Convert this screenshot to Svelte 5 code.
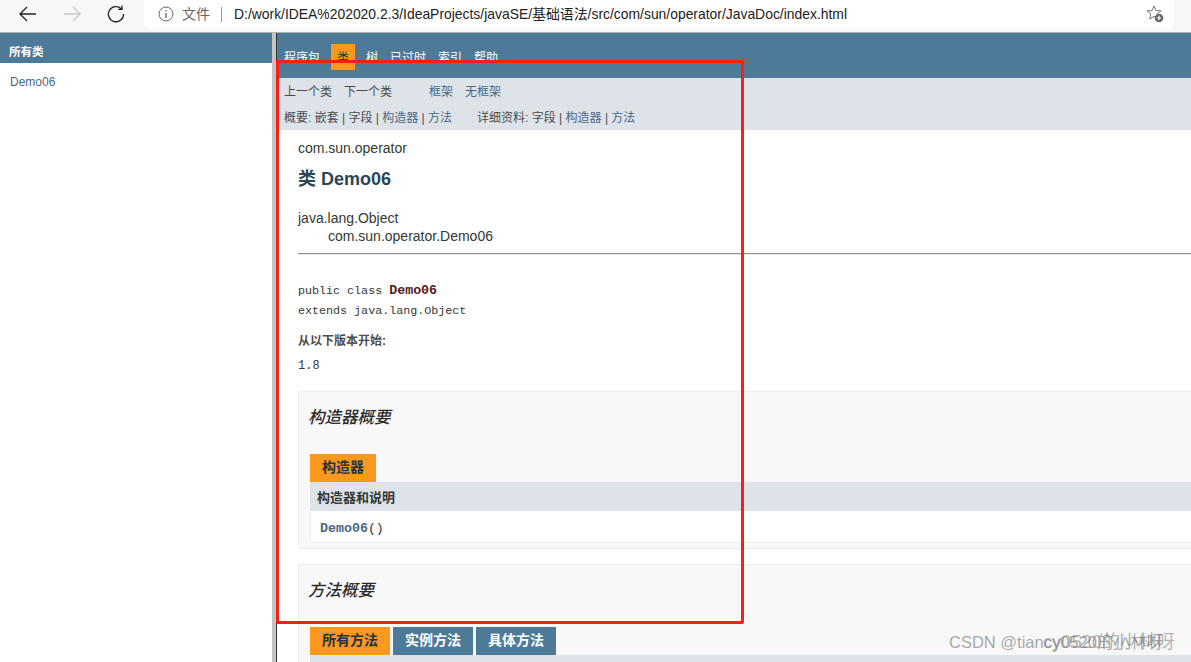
<script>
	const navItems = ['程序包', '类', '树', '已过时', '索引', '帮助'];
	const methodTabs = ['所有方法', '实例方法', '具体方法'];
</script>

<div class="window">
	<header class="toolbar">
		<div class="nav-buttons">
			<svg width="20" height="20" viewBox="0 0 20 20" fill="none" stroke="#222" stroke-width="1.3">
				<path d="M2 10H18M9 3L2 10L9 17" />
			</svg>
			<svg width="20" height="20" viewBox="0 0 20 20" fill="none" stroke="#c9c9c9" stroke-width="1.3">
				<path d="M2 10H18M11 3L18 10L11 17" />
			</svg>
			<svg width="18" height="18" viewBox="0 0 18 18" fill="none" stroke="#222" stroke-width="1.3">
				<path d="M14.200 3.600A7.600 7.600 0 1 0 16.600 9M15 .6V4.300H11.200" />
			</svg>
		</div>
		<div class="address">
			<svg width="16" height="16" viewBox="0 0 16 16" fill="none" stroke="#666" stroke-width="1">
				<circle cx="8" cy="8" r="7" />
				<path d="M8 7V12M8 4V5.400" stroke-width="1.300" />
			</svg>
			<span class="scheme">文件</span>
			<span class="sep"></span>
			<span class="url">D:/work/IDEA%202020.2.3/IdeaProjects/javaSE/基础语法/src/com/sun/operator/JavaDoc/index.html</span>
			<svg class="star" width="18" height="18" viewBox="0 0 18 18">
				<path d="M8 1L10 5.700H15L11.200 9L12.300 14L8 11.300L3.700 14L4.800 9L1 5.700H6Z" fill="none" stroke="#777" stroke-width="1" />
				<circle cx="13" cy="13" r="4.300" fill="#666" />
				<path d="M13 10.800V15.200M10.800 13H15.200" stroke="#fff" stroke-width="1.200" />
			</svg>
		</div>
	</header>

	<div class="frames">
		<aside class="left">
			<div class="left-title">所有类</div>
			<a class="left-link" href="#demo">Demo06</a>
		</aside>
		<div class="splitter"></div>
		<main class="doc">
			<nav class="topnav">
				{#each navItems as item}
					<span class="navitem" class:current={item === '类'}>{item}</span>
				{/each}
			</nav>
			<div class="subnav">
				<div class="subrow first">
					<span class="dim">上一个类</span>
					<span class="dim next">下一个类</span>
					<a href="#f" class="frame">框架</a>
					<a href="#n" class="noframe">无框架</a>
				</div>
				<div class="subrow second">
					<span class="dim">概要: 嵌套 | 字段 | <a href="#c">构造器</a> | <a href="#m">方法</a></span>
					<span class="dim detail">详细资料: 字段 | <a href="#c">构造器</a> | <a href="#m">方法</a></span>
				</div>
			</div>
			<div class="content">
				<div class="pkg">com.sun.operator</div>
				<h2>类 Demo06</h2>
				<div class="tree">
					<div>java.lang.Object</div>
					<div class="indent">com.sun.operator.Demo06</div>
				</div>
				<hr />
				<pre class="sig">public class <b>Demo06</b>
extends java.lang.Object</pre>
				<div class="since">从以下版本开始:</div>
				<div class="version">1.8</div>

				<section class="block">
					<h3>构造器概要</h3>
					<div class="tabs"><span class="tab active">构造器</span></div>
					<div class="thead">构造器和说明</div>
					<div class="row"><a href="#d" class="code-link">Demo06</a><span class="paren">()</span></div>
				</section>

				<section class="block methods">
					<h3>方法概要</h3>
					<div class="tabs">
						{#each methodTabs as tab, i}
							<span class="tab" class:active={i === 0}>{tab}</span>
						{/each}
					</div>
					<div class="thead"></div>
				</section>
			</div>
		</main>
	</div>

	<div class="redbox"></div>
	<div class="watermark">CSDN @tiancy0520的小林呀</div>
	<div class="watermark over">cy0520的小林呀</div>
</div>

<style>
	:global(body) {
		margin: 0;
		overflow: hidden;
	}

	.window {
		position: relative;
		width: 1191px;
		height: 662px;
		overflow: hidden;
		background: #fff;
		font-family: 'Liberation Sans', 'Noto Sans CJK SC', sans-serif;
		color: #353833;
	}

	.toolbar {
		display: flex;
		height: 33px;
		box-sizing: border-box;
		background: #f7f7f7;
		border-bottom: 1px solid #b4b4b4;
	}

	.nav-buttons {
		display: flex;
		align-items: center;
		width: 144px;
		height: 28px;
		padding-left: 18px;
		box-sizing: border-box;
		gap: 24px;
	}

	.nav-buttons svg:last-child {
		margin-left: 1px;
	}

	.address {
		display: flex;
		align-items: center;
		width: 1030px;
		height: 29px;
		box-sizing: border-box;
		padding: 0 0 1px 14px;
		background: #fff;
		border-radius: 0 0 6px 6px;
	}

	.scheme {
		margin-left: 8px;
		font-size: 14px;
		line-height: 14px;
		color: #666;
	}

	.sep {
		width: 1px;
		height: 15px;
		margin: 0 12px 0 11px;
		background: #999;
	}

	.url {
		font-size: 13.900px;
		line-height: 14px;
		color: #222;
		white-space: nowrap;
	}

	.star {
		margin-left: auto;
		margin-right: 10px;
	}

	.frames {
		display: flex;
		height: 629px;
	}

	.left {
		width: 272px;
		flex: none;
	}

	.left-title {
		height: 30px;
		padding: 12px 0 0 9px;
		box-sizing: border-box;
		background: #4d7a97;
		color: #fff;
		font-size: 11.500px;
		font-weight: bold;
		line-height: 14px;
	}

	.left-link {
		display: block;
		margin: 12px 0 0 10px;
		font-size: 12px;
		line-height: 15px;
		color: #4a6782;
		text-decoration: none;
	}

	.splitter {
		flex: none;
		width: 4px;
		background: #c4c4c4;
		border-right: 1px solid #333;
	}

	.doc {
		flex: 1;
		min-width: 0;
	}

	.topnav {
		display: flex;
		gap: 12px;
		height: 45px;
		box-sizing: border-box;
		padding: 11px 0 0 7px;
		background: #4d7a97;
		font-size: 12px;
		color: #fff;
	}

	.navitem {
		padding: 6px 0;
		height: 16px;
		line-height: 16px;
	}

	.navitem.current {
		box-sizing: border-box;
		height: 26px;
		margin: 0 -1px;
		padding: 6px 6px 4px;
		background: #fb981f;
		color: #253441;
	}

	.subnav {
		height: 52px;
		box-sizing: border-box;
		padding-left: 7px;
		background: #dee3e9;
		font-size: 12px;
	}

	.subnav a {
		color: #4a6782;
		text-decoration: none;
	}

	.subrow {
		display: flex;
		white-space: nowrap;
		line-height: 16px;
	}

	.subrow.first {
		padding-top: 6px;
	}

	.subrow.second {
		padding-top: 10px;
	}

	.dim {
		color: #4c4c4c;
	}

	.next {
		margin-left: 12px;
	}

	.frame {
		margin-left: 37px;
	}

	.noframe {
		margin-left: 12px;
	}

	.detail {
		margin-left: 25px;
	}

	.content {
		padding: 0 0 0 21px;
	}

	.pkg {
		padding-top: 10px;
		font-size: 14px;
		line-height: 16px;
	}

	h2 {
		margin: 12px 0 0;
		font-size: 18px;
		line-height: 22px;
		color: #2c4557;
		font-weight: bold;
	}

	.tree {
		margin-top: 19px;
		font-size: 14px;
		line-height: 18px;
	}

	.indent {
		padding-left: 30px;
	}

	hr {
		margin: 8px 0 0;
		border: none;
		border-top: 1px solid #8f8f8f;
		border-bottom: 1px solid #e8e8e8;
		height: 0;
	}

	.sig {
		margin: 26px 0 0;
		font-family: 'Liberation Mono', 'Noto Sans CJK SC', monospace;
		font-size: 11.700px;
		line-height: 20px;
		color: #353833;
	}

	.sig b {
		color: #4e1c1c;
		font-size: 13.300px;
	}

	.since {
		margin-top: 12px;
		font-size: 12px;
		font-weight: bold;
		line-height: 16px;
		color: #4e4e4e;
	}

	.version {
		margin-top: 9px;
		font-family: 'Liberation Mono', monospace;
		font-size: 12px;
		line-height: 16px;
	}

	.block {
		margin-top: 17px;
		height: 158px;
		box-sizing: border-box;
		padding: 0 0 0 11px;
		background: #f8f8f8;
		border: 1px solid #ededed;
		border-right: none;
	}

	.block h3 {
		margin: 0 0 0 -2px;
		padding-top: 15px;
		font-size: 16.500px;
		line-height: 21px;
		font-weight: 500;
		font-style: italic;
		color: #2c2c2c;
	}

	.tabs {
		display: flex;
		gap: 3px;
		margin-top: 26px;
	}

	.tab {
		height: 28px;
		padding: 0 12px;
		background: #4d7a97;
		color: #fff;
		font-size: 14px;
		font-weight: bold;
		line-height: 27px;
	}

	.tab.active {
		background: #fb981f;
		color: #253441;
	}

	.thead {
		height: 29px;
		box-sizing: border-box;
		padding-left: 7px;
		background: #dee3e9;
		font-size: 13px;
		font-weight: bold;
		line-height: 31px;
		color: #353833;
	}

	.row {
		height: 32px;
		box-sizing: border-box;
		padding-left: 9px;
		background: #fff;
		border: 1px solid #ededed;
		border-top: none;
		border-right: none;
		font-family: 'Liberation Mono', monospace;
		font-size: 13.300px;
		line-height: 36px;
	}

	.code-link {
		color: #4a6782;
		text-decoration: none;
		font-weight: bold;
	}

	.block.methods {
		margin-top: 15px;
		height: 200px;
	}

	.redbox {
		position: absolute;
		left: 276px;
		top: 60px;
		width: 468px;
		height: 564px;
		box-sizing: border-box;
		border: 3px solid #fb1e14;
		border-radius: 2px;
	}

	.watermark {
		position: absolute;
		left: 949px;
		top: 632px;
		white-space: nowrap;
		font-size: 16.500px;
		line-height: 20px;
		color: rgba(110, 110, 110, 0.6);
	}

	.watermark.over {
		left: 1043px;
		font-size: 18.300px;
		color: rgba(110, 110, 110, 0.5);
	}
</style>
